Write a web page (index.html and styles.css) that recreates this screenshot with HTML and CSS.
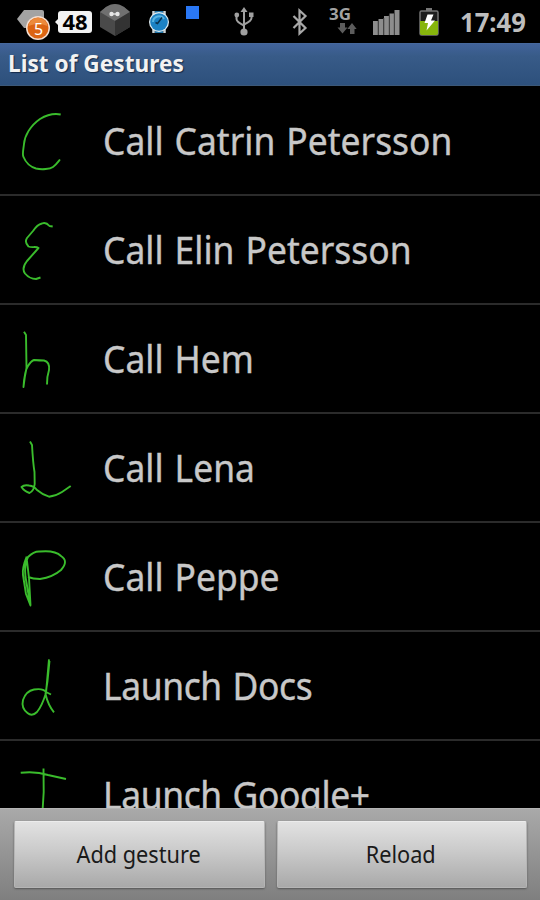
FILE: index.html
```
<!DOCTYPE html>
<html lang="en">
<head>
  <meta charset="UTF-8">
  <meta name="viewport" content="width=device-width, initial-scale=1.0">
  <title>List of Gestures</title>
  <link rel="stylesheet" href="styles.css">
</head>
<body>
  <div class="phone">
    <div class="status">
      <div class="status-left">
        <svg class="tag" width="36" height="36" viewBox="0 0 36 36">
          <path d="M8 3h18a2 2 0 0 1 2 2v16H8L1 12z" fill="#a3a3a3"/>
          <circle cx="22" cy="21" r="12" fill="#f3ded0"/>
          <circle cx="22" cy="21" r="10.500" fill="#dc6413"/>
          <path d="M12.500 19a9.600 9.600 0 0 1 19 0q-9-4-19 0z" fill="#ec8a3c"/>
          <text class="tag-num" x="22.500" y="27.500">5</text>
        </svg>
        <span class="count">48</span>
        <svg class="box" width="34" height="34" viewBox="0 0 34 34">
          <path d="M1 9l6-5q9-6 18 0l6 5v15l-15 9-15-9z" fill="#4a4a4a"/>
          <path d="M1 9l6-5q9-6 18 0l6 5-15 9z" fill="#707070"/>
          <path d="M16 18l15-9v15l-15 9z" fill="#333"/>
          <path d="M11.500 11h8" stroke="#ddd" stroke-width="1.500"/>
          <circle cx="12.500" cy="11" r="2.200" fill="#e6e6e6"/>
          <circle cx="18.500" cy="11" r="2.200" fill="#e6e6e6"/>
        </svg>
        <svg class="watch" width="22" height="24" viewBox="0 0 22 24">
          <path d="M5.500 1v22M16.500 1v22" stroke="#c9d2d6" stroke-width="2.500"/>
          <path d="M7 2.500h8M7 21.500h8" stroke="#2273a5" stroke-width="3"/>
          <circle cx="11" cy="12" r="10" fill="#e0ecf1"/>
          <circle cx="11" cy="12" r="8.800" fill="#1c82c4"/>
          <path d="M5 12a6 6 0 0 1 11-3" fill="none" stroke="#58b4e2" stroke-width="2"/>
          <path d="M14 7.500l-4.500 6-2-1" fill="none" stroke="#0c3350" stroke-width="1.500"/>
        </svg>
        <i class="square"></i>
      </div>
      <div class="status-right">
        <svg class="usb" width="20" height="30" viewBox="0 0 20 30">
          <path d="M10 4v21M2.500 8v4q0 3 7.500 6.500M17.500 8v3q0 3-7.500 6.500" fill="none" stroke="#a0a0a0" stroke-width="2"/>
          <path d="M10 0l3.500 5h-7z" fill="#a0a0a0"/>
          <circle cx="10" cy="25" r="3.600" fill="#a0a0a0"/>
          <circle cx="2.800" cy="8" r="2.400" fill="#a0a0a0"/>
          <path d="M15 5.500h4.500V10H15z" fill="#a0a0a0"/>
        </svg>
        <svg class="bt" width="16" height="28" viewBox="0 0 16 28">
          <path d="M1.500 8l12 12L7.500 25.500v-23L13.500 8l-12 12" fill="none" stroke="#a8a8a8" stroke-width="2.200"/>
        </svg>
        <svg class="net" width="28" height="28" viewBox="0 0 28 28">
          <text class="net-type" x="0" y="12.500" textLength="22" lengthAdjust="spacingAndGlyphs">3G</text>
          <path d="M11 16h5v4.500h2.500l-5 6-5-6H11z" fill="#5c5c5c"/>
          <path d="M21 27h4.500v-5h2.200l-4.700-6-4.700 6H21z" fill="#5c5c5c"/>
        </svg>
        <svg class="signal" width="27" height="25" viewBox="0 0 27 25">
          <path d="M0 11h5v14H0zM5.500 9h5v16h-5zM11 6h5v19h-5zM16.500 3.500h4.500V25h-4.500zM21.500 0H26.500v25h-5z" fill="#8d8d8d"/>
          <path d="M5.200 11v14M10.800 8v17M16.300 5v20M21.300 3v22" stroke="#444" stroke-width="1"/>
        </svg>
        <svg class="battery" width="20" height="28" viewBox="0 0 20 28">
          <path d="M7 0h6v3H7z" fill="#777"/>
          <rect x="1" y="3" width="18" height="24" rx="1.500" fill="#1d1d1d" stroke="#737373" stroke-width="1.500"/>
          <path d="M1 13h18v12a2 2 0 0 1-2 2H3a2 2 0 0 1-2-2z" fill="#86b50c"/>
          <path d="M8.500 6.500h6l-2.500 6h4L7.500 22.500l1.500-7.500H5.500z" fill="#fff"/>
        </svg>
        <span class="clock">17:49</span>
      </div>
    </div>

    <div class="title"><span>List of Gestures</span></div>

    <ul class="list">
      <li>
        <svg viewBox="0 1 104 107"><path d="M60.700 28.500C53 27 45 30 40 33C30 40 24.500 50 24 58C23.500 63 22 68 23.500 71C26 77 31 81 36 82.500C42 84 50 83 53 81C56 79 58 76 60 73.500"/></svg>
        <span>Call Catrin Petersson</span>
      </li>
      <li>
        <svg viewBox="0 1 104 107"><path d="M52.700 31.500L49.500 31C47 28 44 27.500 42 28.500C38 29.500 35 33 33 36L27 43C25 46 26 49 28.500 51.500C32 53 36 51 38.500 53L27 66C23 71 22.500 75 25 78.500C28 82 33 84 36 84L40.500 82.500"/></svg>
        <span>Call Elin Petersson</span>
      </li>
      <li>
        <svg viewBox="0 1 104 107"><path d="M24 27.700L26 31L26.500 64Q24.500 73 23.500 83Q24.500 67 28 62Q31 57 34 56Q40 56.500 44 56.500Q50 58 49 66Q47 72 47 80.500"/></svg>
        <span>Call Hem</span>
      </li>
      <li>
        <svg viewBox="0 1 104 107"><path d="M30 28.500L32 32Q33 50 34.500 59L34.700 71Q34 78 29.500 80Q24 78 21.500 74Q24 71.500 29 72.500Q34 73 37 77Q43 82 49 83.700Q56 83 62 79L70.700 73"/></svg>
        <span>Call Lena</span>
      </li>
      <li>
        <svg viewBox="0 1 104 107"><path d="M26.700 34.500Q22 46 23 53L26 72L30.500 83.500L29 56L26.500 35M30.500 83.500Q28 70 25.500 55Q24 43 28 35Q34 29 40 29.500Q55 28 61 34Q69 39 61 48Q53 55 40 57Q33 57 28 55"/></svg>
        <span>Call Peppe</span>
      </li>
      <li>
        <svg viewBox="0 1 104 107"><path d="M49 28.300L46 62Q42 75 37 81Q32 86 27.500 82Q21 77 23 69Q26 60 34 58.500Q43 57 46 61L51 63.500M49.500 30L47.500 50L45.500 63Q48 74 54 81.300"/></svg>
        <span class="launch">Launch Docs</span>
      </li>
      <li>
        <svg viewBox="0 1 104 107"><path d="M20.700 32.700Q36 31 48 35L66 39M43.500 28.500L43.700 52L42 80"/></svg>
        <span class="launch">Launch Google+</span>
      </li>
    </ul>

    <div class="footer">
      <button class="btn"><span>Add gesture</span></button>
      <button class="btn"><span>Reload</span></button>
    </div>
  </div>
</body>
</html>
```
FILE: styles.css
```
*{
  margin:0;
  padding:0;
  box-sizing:border-box;
}
body{
  background:#000;
  font-family:"Noto Sans","Open Sans",sans-serif;
}
.phone{
  display:flex;
  flex-direction:column;
  width:540px;
  height:900px;
  overflow:hidden;
}
span{
  display:inline-block;
  white-space:nowrap;
}
.status{
  display:flex;
  justify-content:space-between;
  height:43px;
  padding:0 14px 0 16px;
}
.status-left,
.status-right{
  display:flex;
  align-items:flex-start;
}
.tag{
  margin-top:7px;
}
.tag-num{
  font-size:16px;
  fill:#fff;
  text-anchor:middle;
}
.count{
  position:relative;
  width:34px;
  height:22px;
  margin:11px 0 0 6px;
  border-radius:3px;
  background:#f2f2f2;
  color:#000;
  font-size:22px;
  font-weight:bold;
  line-height:21px;
  text-align:center;
}
.count::before{
  content:'';
  position:absolute;
  left:-3px;
  top:8px;
  border:3px solid transparent;
  border-left:0;
  border-right-color:#f2f2f2;
}
.box{
  margin:3px 0 0 7px;
}
.watch{
  margin:10px 0 0 15px;
}
.square{
  width:13px;
  height:13px;
  margin:6px 0 0 16px;
  background:#2a78f5;
}
.usb{
  margin-top:7px;
}
.bt{
  margin:8px 0 0 38px;
}
.net{
  margin:7px 0 0 21px;
  overflow:visible;
}
.net-type{
  font-size:16px;
  font-weight:bold;
  fill:#a2a2a2;
}
.signal{
  margin:10px 0 0 16px;
}
.battery{
  margin:8px 0 0 19px;
}
.clock{
  width:66px;
  margin:5px 0 0 21px;
  color:#bebebe;
  font-size:26px;
  font-weight:bold;
  line-height:35px;
  transform:scaleX(.985);
  transform-origin:left;
}
.title{
  height:43px;
  padding-left:8px;
  border-top:1px solid #46689c;
  border-bottom:1px solid #3c5878;
  background:linear-gradient(#41639a,#385b88 30%,#2d507c);
  color:#f2f2f2;
  font-size:23px;
  font-weight:bold;
  line-height:39px;
  text-shadow:1px 1px 1px #152a48;
}
.title span{
  transform:scaleX(.985);
  transform-origin:left;
}
.list{
  flex:1;
  padding-top:1px;
  overflow:hidden;
  list-style:none;
}
.list li{
  display:flex;
  height:109px;
  border-bottom:2px solid #2b2b2b;
  color:#c8c8c8;
  font-size:38px;
  line-height:107px;
}
.list svg{
  flex:none;
  width:104px;
  height:107px;
  fill:none;
  stroke:#3abc2c;
  stroke-width:1.9;
  stroke-linejoin:round;
}
.list span{
  margin-left:-1px;
  word-spacing:2px;
  -webkit-text-stroke:.4px #c8c8c8;
  transform:scaleX(.932);
  transform-origin:left;
}
.list .launch{
  letter-spacing:-.4px;
}
.footer{
  display:flex;
  gap:12px;
  height:92px;
  padding:12px 13px 13px 14px;
  border-top:1px solid #b4b4b4;
  background:linear-gradient(#a9a9a9,#7f7f7f);
}
.btn{
  flex:1;
  height:67px;
  padding:0 2px 2px 0;
  border:1px solid #b5b5b5;
  border-top-color:#ececec;
  border-radius:2px;
  background:linear-gradient(#e2e2e2,#cacaca 45%,#a9a9a9);
  box-shadow:0 1px 2px #555;
  color:#1a1a1a;
  font-family:inherit;
  font-size:24px;
}
.btn span{
  transform:scaleX(.905);
}
```
